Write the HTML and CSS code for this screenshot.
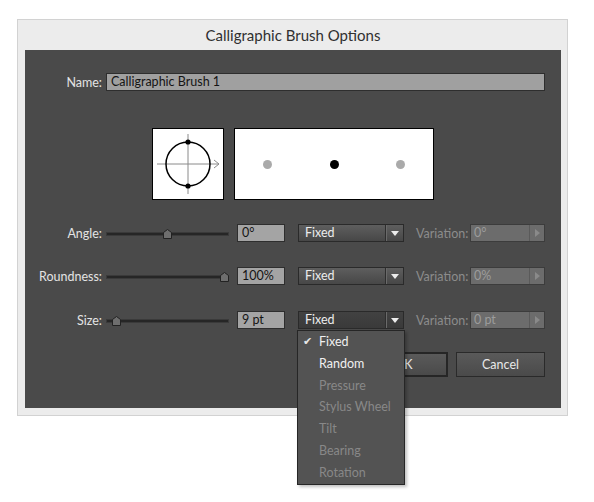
FILE: index.html
```html
<!DOCTYPE html>
<html>
<head>
<meta charset="utf-8">
<link rel="stylesheet" href="styles.css">
</head>
<body>
<div class="dialog">
  <div class="title">Calligraphic Brush Options</div>
  <div class="panel">
    <div class="row name-row">
      <div class="label">Name:</div>
      <div class="name-field">Calligraphic Brush 1</div>
    </div>
    <div class="previews">
      <div class="angle-box">
        <svg width="70" height="70" viewBox="0 0 70 70">
          <line x1="4" y1="35" x2="66" y2="35" stroke="#8a8a8a" stroke-width="1"/>
          <polyline points="61,31 66,35 61,39" fill="none" stroke="#8a8a8a" stroke-width="1"/>
          <line x1="35" y1="5" x2="35" y2="65" stroke="#8a8a8a" stroke-width="1"/>
          <circle cx="35" cy="35" r="22" fill="none" stroke="#000" stroke-width="1.5"/>
          <circle cx="35" cy="13" r="2.6" fill="#000"/>
          <circle cx="35" cy="57" r="2.6" fill="#000"/>
        </svg>
      </div>
      <div class="preview-box">
        <span class="dot grey"></span>
        <span class="dot black"></span>
        <span class="dot grey"></span>
      </div>
    </div>
    <div class="row param first">
      <div class="label">Angle:</div>
      <div class="slider">
        <div class="track"></div>
        <svg class="thumb" style="left: 57px" width="9" height="10" viewBox="0 0 9 10"><path d="M0.5 9.5 V3.5 L4.5 0.5 L8.5 3.5 V9.5 Z" fill="#6e6e6e" stroke="#222"/></svg>
      </div>
      <div class="value">0°</div>
      <div class="select"><span class="sel-text">Fixed</span><span class="sel-btn"><i class="down"></i></span></div>
      <div class="var-label">Variation:</div>
      <div class="var-field"><span class="var-text">0°</span><span class="var-btn"><i class="right"></i></span></div>
    </div>
    <div class="row param">
      <div class="label">Roundness:</div>
      <div class="slider">
        <div class="track"></div>
        <svg class="thumb" style="left: 114px" width="9" height="10" viewBox="0 0 9 10"><path d="M0.5 9.5 V3.5 L4.5 0.5 L8.5 3.5 V9.5 Z" fill="#6e6e6e" stroke="#222"/></svg>
      </div>
      <div class="value">100%</div>
      <div class="select"><span class="sel-text">Fixed</span><span class="sel-btn"><i class="down"></i></span></div>
      <div class="var-label">Variation:</div>
      <div class="var-field"><span class="var-text">0%</span><span class="var-btn"><i class="right"></i></span></div>
    </div>
    <div class="row param last">
      <div class="label">Size:</div>
      <div class="slider">
        <div class="track"></div>
        <svg class="thumb" style="left: 6px" width="9" height="10" viewBox="0 0 9 10"><path d="M0.5 9.5 V3.5 L4.5 0.5 L8.5 3.5 V9.5 Z" fill="#6e6e6e" stroke="#222"/></svg>
      </div>
      <div class="value">9 pt</div>
      <div class="select open"><span class="sel-text">Fixed</span><span class="sel-btn"><i class="down"></i></span></div>
      <div class="var-label">Variation:</div>
      <div class="var-field"><span class="var-text">0 pt</span><span class="var-btn"><i class="right"></i></span></div>
    </div>
    <div class="buttons">
      <div class="btn default">OK</div>
      <div class="btn">Cancel</div>
    </div>
    <div class="menu">
      <div class="item checked">Fixed</div>
      <div class="item">Random</div>
      <div class="item disabled">Pressure</div>
      <div class="item disabled">Stylus Wheel</div>
      <div class="item disabled">Tilt</div>
      <div class="item disabled">Bearing</div>
      <div class="item disabled">Rotation</div>
    </div>
  </div>
</div>
</body>
</html>
```
FILE: styles.css
```css
html, body {
  margin: 0;
  padding: 0;
  background: #ffffff;
}
body {
  font-family: Lato, "Liberation Sans", sans-serif;
  font-size: 12.5px;
  min-height: 502px;
  position: relative;
}
.dialog {
  margin: 19px 0 0 17px;
  width: 536px;
  height: 388px;
  border: 1px solid #d2d2d2;
  background: #ececec;
  padding: 0 6px 7px 7px;
  box-sizing: content-box;
  display: flex;
  flex-direction: column;
  position: relative;
}
.title {
  height: 30px;
  line-height: 30px;
  text-align: center;
  font-size: 15px;
  color: #303030;
  flex: none;
}
.panel {
  position: relative;
  flex: 1;
  background: #4a4a4a;
  padding: 23px 16px 0 0;
  box-sizing: border-box;
  display: flex;
  flex-direction: column;
}
.row {
  display: flex;
  align-items: center;
  height: 18px;
}
.label {
  width: 77px;
  margin-right: 4px;
  text-align: right;
  color: #e4e4e4;
  flex: none;
}
.name-field {
  flex: 1;
  height: 18px;
  box-sizing: border-box;
  border: 1px solid #2e2e2e;
  background: #a0a0a0;
  color: #141414;
  line-height: 16px;
  padding-left: 4px;
}
.previews {
  display: flex;
  gap: 10px;
  margin: 37px 0 0 127px;
  height: 72px;
}
.angle-box {
  width: 72px;
  height: 72px;
  box-sizing: border-box;
  border: 1px solid #000;
  background: #fff;
}
.angle-box svg {
  display: block;
}
.preview-box {
  width: 200px;
  height: 72px;
  box-sizing: border-box;
  border: 1px solid #000;
  background: #fff;
  display: flex;
  align-items: center;
  justify-content: space-between;
  padding: 0 28px;
}
.dot {
  width: 9px;
  height: 9px;
  border-radius: 50%;
}
.dot.grey { background: #aaaaaa; }
.dot.black { background: #000; }
.param.first { margin-top: 24px; }
.param { margin-top: 25px; }
.param.last { margin-top: 26px; }
.slider {
  position: relative;
  width: 123px;
  height: 18px;
  flex: none;
}
.track {
  position: absolute;
  left: 0;
  right: 0;
  top: 7.5px;
  height: 4px;
  background: #262626;
  border: 1px solid #3a3a3a;
  box-sizing: border-box;
}
.thumb {
  position: absolute;
  top: 5px;
  display: block;
}
.value {
  margin-left: 8px;
  width: 48px;
  height: 18px;
  box-sizing: border-box;
  border: 1px solid #2e2e2e;
  background: #a4a4a4;
  color: #141414;
  line-height: 16px;
  padding-left: 4px;
  flex: none;
}
.select {
  margin-left: 13px;
  width: 106px;
  height: 18px;
  box-sizing: border-box;
  border: 1px solid #2a2a2a;
  background: linear-gradient(#5e5e5e, #474747);
  display: flex;
  flex: none;
}
.select.open {
  background: linear-gradient(#424242, #3a3a3a);
}
.sel-text {
  flex: 1;
  color: #ececec;
  line-height: 16px;
  padding-left: 6px;
}
.sel-btn {
  width: 17px;
  border-left: 1px solid #2e2e2e;
  box-shadow: inset 1px 0 0 #6a6a6a;
  display: flex;
  align-items: center;
  justify-content: center;
}
.down {
  width: 0;
  height: 0;
  border-left: 4px solid transparent;
  border-right: 4px solid transparent;
  border-top: 5px solid #ececec;
}
.var-label {
  margin-left: 12px;
  color: #8c8c8c;
  width: 50px;
  flex: none;
}
.var-field {
  margin-left: 4px;
  width: 75px;
  height: 18px;
  box-sizing: border-box;
  border: 1px solid #3c3c3c;
  background: #6c6c6c;
  display: flex;
  flex: none;
}
.var-text {
  flex: 1;
  color: #9c9c9c;
  line-height: 16px;
  padding-left: 3px;
}
.var-btn {
  width: 14px;
  border-left: 1px solid #5a5a5a;
  display: flex;
  align-items: center;
  justify-content: center;
}
.right {
  width: 0;
  height: 0;
  border-top: 4px solid transparent;
  border-bottom: 4px solid transparent;
  border-left: 5px solid #8a8a8a;
}
.buttons {
  display: flex;
  justify-content: flex-end;
  gap: 8px;
  margin-top: 23px;
}
.btn {
  width: 89px;
  height: 25px;
  box-sizing: border-box;
  border: 1px solid #2a2a2a;
  background: linear-gradient(#5a5a5a, #4a4a4a);
  color: #e8e8e8;
  text-align: center;
  line-height: 23px;
}
.btn.default {
  border: 2px solid #262626;
  line-height: 21px;
}
.menu {
  position: absolute;
  left: 272px;
  top: 280px;
  width: 108px;
  box-sizing: border-box;
  border: 1px solid #262626;
  background: #535353;
  box-shadow: 2px 2px 3px rgba(0,0,0,0.25);
  z-index: 5;
}
.item {
  position: relative;
  height: 21.8px;
  line-height: 21.8px;
  padding-left: 21px;
  color: #f0f0f0;
}
.item.disabled {
  color: #888888;
}
.item.checked::before {
  content: "\2714";
  position: absolute;
  left: 5px;
  top: 0;
  color: #e6e6e6;
  font-family: "DejaVu Sans", sans-serif;
  font-size: 11px;
}
```
